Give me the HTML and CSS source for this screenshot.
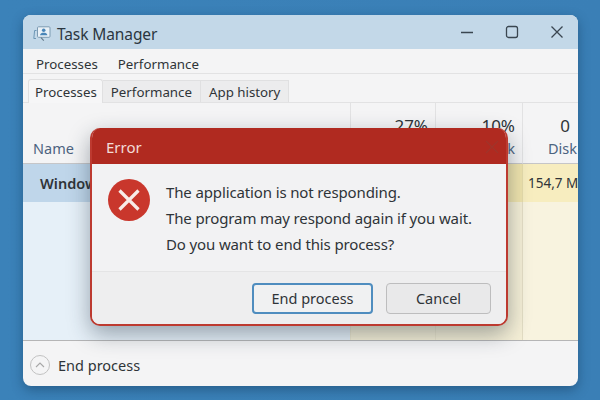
FILE: index.html
```html
<!DOCTYPE html>
<html lang="en">

<head>
    <meta charset="UTF-8">
    <title>Task Manager</title>
    <link rel="stylesheet" href="styles.css">
</head>

<body>
    <div class="ventana">
        <header class="titulo">
            <svg class="titulo-icono" width="18" height="16" viewBox="0 0 18 16" fill="none">
                <path d="M3.5 4.5H1.6L.8 12.5H3" stroke="#6d97b5" stroke-width="1"/>
                <rect x="4.5" y=".8" width="12.5" height="10.5" rx="1" fill="#e9f1f7" stroke="#7d9bb2" stroke-width="1"/>
                <circle cx="10.7" cy="4.2" r="1.8" fill="#4a86b8"/>
                <path d="M7 9.3c.4-2 1.8-2.6 3.7-2.6s3.3.6 3.7 2.6z" fill="#4a86b8"/>
                <path d="M8 11.6l2.8 3" stroke="#62788a" stroke-width="1.1"/>
            </svg>
            <span class="titulo-texto">Task Manager</span>
            <div class="controles">
                <svg width="14" height="14" viewBox="0 0 14 14"><path d="M1 7.5h12" stroke="#3a4650" stroke-width="1.3"/></svg>
                <svg width="14" height="14" viewBox="0 0 14 14" fill="none"><rect x="1.5" y="1.5" width="11" height="11" rx="2" stroke="#3a4650" stroke-width="1.3"/></svg>
                <svg width="14" height="14" viewBox="0 0 14 14"><path d="M1.5 1.5l11 11M12.5 1.5l-11 11" stroke="#3a4650" stroke-width="1.3"/></svg>
            </div>
        </header>

        <nav class="menu">
            <span>Processes</span>
            <span>Performance</span>
        </nav>

        <div class="pestanas">
            <span class="pestana activa">Processes</span>
            <span class="pestana">Performance</span>
            <span class="pestana">App history</span>
        </div>

        <section class="tabla">
            <div class="cab cab-nombre"><span class="cab-etiqueta">Name</span></div>
            <div class="cab"><span class="cab-valor">27%</span><span class="cab-etiqueta">Memory</span></div>
            <div class="cab"><span class="cab-valor">10%</span><span class="cab-etiqueta">Disk</span></div>
            <div class="cab cab-ultima"><span class="cab-valor">0</span><span class="cab-etiqueta">Disk</span></div>

            <div class="celda fila-nombre">Windows Explorer</div>
            <div class="celda fila-dato"></div>
            <div class="celda fila-dato"></div>
            <div class="celda fila-dato fila-ultima">154,7 M</div>

            <div class="relleno relleno-azul"></div>
            <div class="relleno relleno-crema"></div>
            <div class="relleno relleno-crema"></div>
            <div class="relleno relleno-claro"></div>
        </section>

        <footer class="pie">
            <span class="pie-boton">
                <svg width="10" height="6" viewBox="0 0 10 6" fill="none"><path d="M1 5l4-4 4 4" stroke="#a8a8a8" stroke-width="1.1"/></svg>
            </span>
            <span>End process</span>
        </footer>
    </div>

    <div class="dialogo">
        <div class="dialogo-titulo">
            <span>Error</span>
            <svg width="14" height="14" viewBox="0 0 14 14"><path d="M1 1l12 12M13 1L1 13" stroke="#a0342a" stroke-width="1.2"/></svg>
        </div>
        <div class="dialogo-cuerpo">
            <svg class="error-icono" width="42" height="42" viewBox="0 0 42 42">
                <circle cx="21" cy="21" r="21" fill="#c9372c"/>
                <path d="M11.5 11.5l19 19M30.5 11.5l-19 19" stroke="#f8ece8" stroke-width="3.2"/>
            </svg>
            <div class="mensaje">
                <p>The application is not responding.</p>
                <p>The program may respond again if you wait.</p>
                <p>Do you want to end this process?</p>
            </div>
        </div>
        <div class="dialogo-botones">
            <button type="button" class="boton boton-principal">End process</button>
            <button type="button" class="boton">Cancel</button>
        </div>
    </div>
</body>

</html>
```

FILE: styles.css
```css
* {
    box-sizing: border-box;
}

html,
body {
    height: 100%;
}

body {
    margin: 0;
    padding: 15px 22px 14px 23px;
    overflow: hidden;
    font-family: "Noto Sans", "Open Sans", sans-serif;
    color: #2f3438;
    background: linear-gradient(90deg, #3b82b9, #3a7fb6);
}

.ventana {
    display: flex;
    flex-direction: column;
    height: 371px;
    border-radius: 8px;
    overflow: hidden;
    background-color: #f4f4f5;
    box-shadow: 0 4px 12px rgba(15, 50, 85, 0.45);
}

.titulo {
    display: flex;
    align-items: center;
    flex: 0 0 34px;
    padding-left: 10px;
    background-color: #c3d8e8;
}

.titulo-icono {
    margin-right: 6px;
    margin-top: 3px;
}

.titulo-texto {
    padding-top: 3px;
    font-size: 15.5px;
    letter-spacing: -0.1px;
    color: #2b3640;
}

.controles {
    display: flex;
    gap: 31px;
    margin-left: auto;
    margin-right: 14px;
}

.menu {
    display: flex;
    align-items: center;
    gap: 20px;
    flex: 0 0 25px;
    padding: 5px 0 0 13px;
    font-size: 13.3px;
    border-bottom: 1px solid #e2e2e3;
}

.pestanas {
    display: flex;
    align-items: flex-end;
    flex: 0 0 29px;
    padding-left: 5px;
    border-bottom: 1px solid #e2e2e3;
}

.pestana {
    display: flex;
    align-items: center;
    justify-content: center;
    height: 22px;
    padding: 0 8px;
    font-size: 13.3px;
    background-color: #ececed;
    border: 1px solid #e0e0e1;
    border-width: 1px 1px 0 0;
}

.activa {
    height: 24px;
    margin-bottom: -1px;
    padding: 0 5px 0 6px;
    background-color: #f6f6f7;
    border-width: 1px 1px 0 1px;
    border-radius: 3px 3px 0 0;
}

.tabla {
    display: grid;
    grid-template-columns: 327px 85px 87px 56px;
    grid-template-rows: 61px 38px 1fr;
    flex: 1;
    min-height: 0;
}

.cab {
    display: flex;
    flex-direction: column;
    align-items: flex-end;
    justify-content: flex-end;
    padding: 0 7px 5px 0;
    border-left: 1px solid #e2e2e3;
    border-bottom: 1px solid #c6c6c8;
    overflow: hidden;
}

.cab-nombre {
    align-items: flex-start;
    padding-left: 10px;
    border-left: 0;
}

.cab-ultima {
    padding-right: 1px;
}

.cab-ultima .cab-valor {
    margin-right: 7px;
}

.cab-valor {
    font-size: 17px;
    line-height: 24px;
}

.cab-etiqueta {
    font-size: 14.5px;
    line-height: 20px;
    color: #4c6380;
}

.celda {
    display: flex;
    align-items: center;
}

.fila-nombre {
    padding-left: 17px;
    font-size: 14.5px;
    font-weight: 600;
    background-color: #bfd6ea;
}

.fila-dato {
    font-size: 13.5px;
    white-space: nowrap;
    overflow: hidden;
    background-color: #f0e4ad;
    border-left: 1px solid #e6dcab;
}

.fila-ultima {
    padding-left: 5px;
    background-color: #f7edbf;
}

.relleno-azul {
    background-color: #e6f0f8;
}

.relleno-crema {
    background-color: #f5efd6;
    border-left: 1px solid #ece6cd;
}

.relleno-claro {
    background-color: #f8f3df;
    border-left: 1px solid #e3ddc4;
}

.pie {
    display: flex;
    align-items: center;
    gap: 8px;
    flex: 0 0 46px;
    padding: 2px 0 0 7px;
    font-size: 14.5px;
    border-top: 1px solid #b5b5b6;
}

.pie-boton {
    display: flex;
    align-items: center;
    justify-content: center;
    width: 20px;
    height: 20px;
    border: 1px solid #c2c2c2;
    border-radius: 50%;
}

.dialogo {
    position: absolute;
    top: 128px;
    left: 90px;
    display: flex;
    flex-direction: column;
    width: 418px;
    height: 198px;
    border: 2px solid #bd3a30;
    border-top: 0;
    border-radius: 10px;
    overflow: hidden;
    background-color: #f2f2f3;
    box-shadow: 0 8px 22px rgba(30, 45, 60, 0.4);
}

.dialogo-titulo {
    display: flex;
    align-items: center;
    justify-content: space-between;
    flex: 0 0 36px;
    margin: 0 -2px;
    padding: 2px 9px 0 16px;
    font-size: 15px;
    color: #f3dcd8;
    background-color: #b02a20;
}

.dialogo-cuerpo {
    display: flex;
    flex: 1;
    padding: 15px 0 0 16px;
}

.error-icono {
    flex: none;
}

.mensaje {
    margin-left: 16px;
    font-size: 15px;
    line-height: 26px;
    letter-spacing: -0.13px;
}

.mensaje p {
    margin: 0;
}

.dialogo-botones {
    display: flex;
    justify-content: flex-end;
    align-items: center;
    gap: 13px;
    flex: 0 0 53px;
    padding: 0 15px 0 0;
    background-color: #eeeeef;
    border-top: 1px solid #e4e4e5;
}

.boton {
    width: 105px;
    height: 31px;
    padding: 0;
    font-family: inherit;
    font-size: 14.5px;
    color: #2f3438;
    background-color: #e9e9ea;
    border: 1px solid #bdbdbe;
    border-radius: 4px;
}

.boton-principal {
    width: 121px;
    background-color: #f0f1f2;
    border: 2px solid #4f8dbf;
}
```
